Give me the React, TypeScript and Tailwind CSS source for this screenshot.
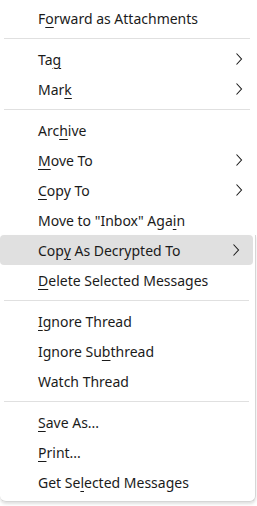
import React from 'react';

type Item = { label: string; key?: number; sub?: boolean; active?: boolean } | 'sep';

// key = index of the access-key letter that gets underlined
const TOP: Item[] = [
  { label: 'Forward as Attachments', key: 1 },
  'sep',
  { label: 'Tag', key: 2, sub: true },
  { label: 'Mark', key: 3, sub: true },
  'sep',
  { label: 'Archive', key: 3 },
  { label: 'Move To', key: 0, sub: true },
  { label: 'Copy To', key: 0, sub: true },
  { label: 'Move to "Inbox" Again', key: 19 },
];

const BOTTOM: Item[] = [
  { label: 'Copy As Decrypted To', key: 3, sub: true, active: true },
  { label: 'Delete Selected Messages', key: 0 },
  'sep',
  { label: 'Ignore Thread', key: 0 },
  { label: 'Ignore Subthread', key: 9 },
  { label: 'Watch Thread' },
  'sep',
  { label: 'Save As...', key: 0 },
  { label: 'Print...', key: 0 },
  { label: 'Get Selected Messages', key: 6 },
];

function Chevron() {
  return (
    <svg width="8" height="14" viewBox="0 0 8 14" className="mr-[13px]">
      <polyline points="1.5,1.5 6.5,7 1.5,12.5" fill="none" stroke="#1b1b1b" strokeWidth="1.1" />
    </svg>
  );
}

function Label({ label, k }: { label: string; k?: number }) {
  if (k === undefined) return <span>{label}</span>;
  return (
    <span>
      {label.slice(0, k)}
      <span className="underline underline-offset-[3px] decoration-1">{label[k]}</span>
      {label.slice(k + 1)}
    </span>
  );
}

function Rows({ items }: { items: Item[] }) {
  return (
    <>
      {items.map((it, i) =>
        it === 'sep' ? (
          <div key={i} className="py-[5px] pl-[4px] pr-[6px]">
            <div className="h-px bg-[#e0e0e0]" />
          </div>
        ) : (
          <div
            key={i}
            className={`flex h-[30px] items-center justify-between pl-[38px] ${it.active ? 'rounded-[4px] bg-[#e0e0e0] mr-[2px]' : ''}`}
          >
            <Label label={it.label} k={it.key} />
            {it.sub && <Chevron />}
          </div>
        )
      )}
    </>
  );
}

export default function App() {
  return (
    <div className="h-[506px] w-[257px] bg-white">
      <div
        className="w-[256px] text-[14px] text-[#1b1b1b]"
        style={{ fontFamily: '"Noto Sans", "Open Sans", sans-serif' }}
      >
        <div className="pt-[3px]">
          <Rows items={TOP} />
        </div>
        <div className="rounded-br-[6px] rounded-bl-[6px] border-r border-b border-[#d6d6d6] pb-[4px] shadow-[0_2px_3px_rgba(0,0,0,0.12)]">
          <Rows items={BOTTOM} />
        </div>
      </div>
    </div>
  );
}
